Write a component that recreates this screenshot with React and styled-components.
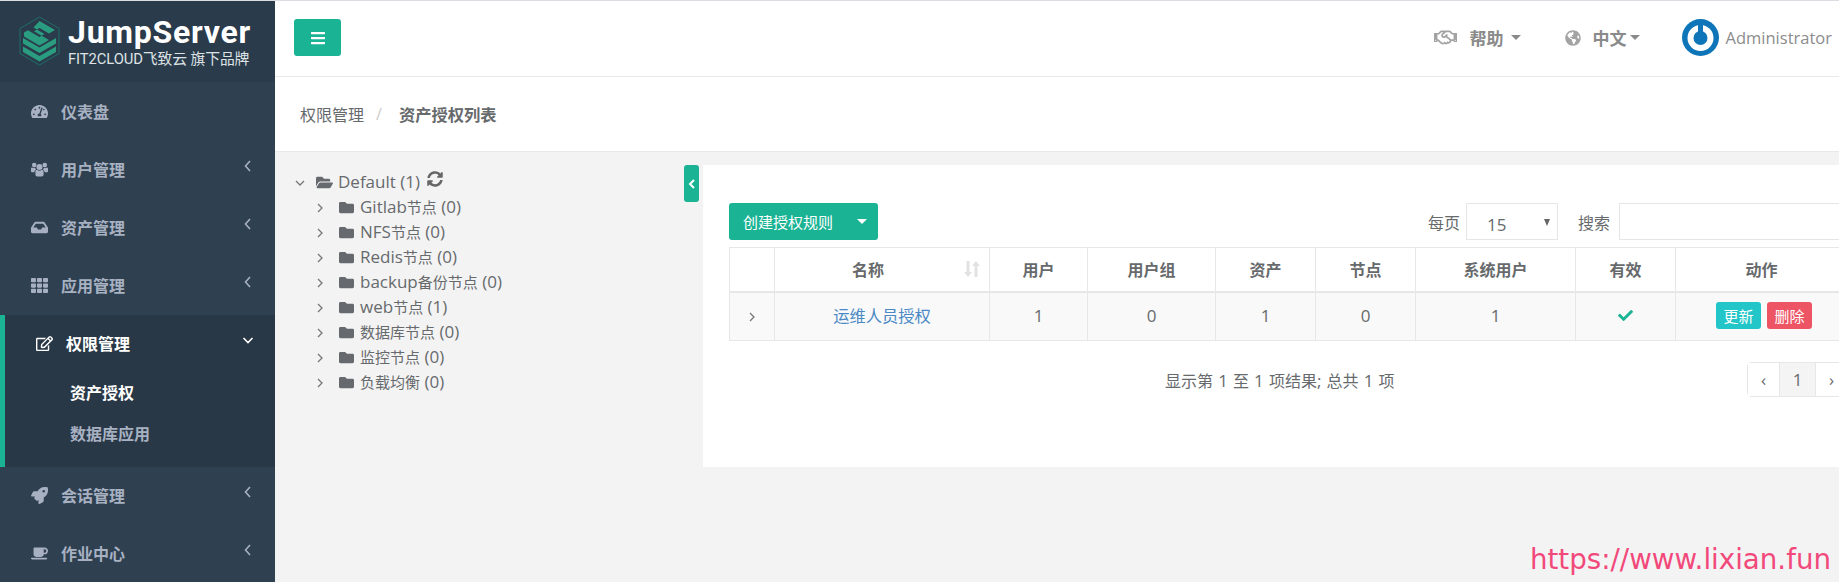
import React from "react";
import styled, { createGlobalStyle } from "styled-components";
import {
  FaTachometerAlt, FaInbox, FaTh, FaRegEdit, FaRocket, FaCoffee,
  FaRegHandshake, FaGlobeAmericas, FaSyncAlt, FaFolder, FaFolderOpen, FaCheck, FaBars,
} from "react-icons/fa";

const Global = createGlobalStyle`
  html, body { margin: 0; padding: 0; background: #f3f3f4; }
  * { box-sizing: border-box; }
  body { font-family: "Open Sans", "Noto Sans CJK SC", sans-serif; color: #676a6c; font-size: 16px; }
`;

const Shell = styled.div`
  position: relative;
  width: 1839px; height: 582px; overflow: hidden;
  display: grid; grid-template-columns: 275px 1fr;
  border-top: 1px solid #dcdde2;
  background: #f3f3f4;
`;
const Side = styled.aside`background: #2f4050; display: flex; flex-direction: column; height: 581px; overflow: hidden;`;
const Brand = styled.div`
  height: 81px; flex: none; background: #2a3b4b; margin-bottom: 1px;
  display: flex; align-items: flex-start; padding: 15px 0 0 19px; gap: 8px;
`;
const BrandText = styled.div`display: flex; flex-direction: column; color: #fff; width: 190px;`;
const BrandName = styled.span`
  font: 700 32px/36px "Roboto", sans-serif; letter-spacing: 0.75px; height: 36px; margin-top: -2px; white-space: nowrap;
`;
const BrandSub = styled.span`
  font: 400 14.8px/16px "Roboto", "Noto Sans CJK SC", sans-serif; color: #dfe3e6; margin-top: 1px; white-space: nowrap; letter-spacing: -0.1px;
`;
const NavItem = styled.div`
  height: 58px; flex: none; position: relative; display: flex; align-items: center; padding: 0 0 2px 31px;
  font-weight: 700; font-size: 16px; color: #a7b1c2;
  svg.nav { width: 17px; height: 17px; margin-right: 13px; flex: none; }
`;
const NavGroup = styled.div`
  height: 152px; flex: none; background: #293846; border-left: 5px solid #1ab394; display: flex; flex-direction: column;
  ${NavItem} { color: #fff; }
`;
const SubItem = styled.div`
  height: 41px; flex: none; display: flex; align-items: center; padding: 0 0 4px 65px; font-weight: 700; font-size: 16px;
  color: ${p => (p.$on ? "#fff" : "#a7b1c2")};
`;
const NavArrow = styled.svg`
  position: absolute; right: ${p => p.$r}px; top: 19px; width: 12px; height: 12px; fill: none; stroke: currentColor; stroke-width: 1.6;
`;
const Main = styled.main`display: flex; flex-direction: column; min-width: 0; overflow: hidden;`;
const Topbar = styled.header`
  height: 76px; flex: none; background: #fff; border-bottom: 1px solid #e7eaec;
  display: flex; align-items: center; padding-left: 19px;
`;
const MenuBtn = styled.button`
  width: 47px; height: 37px; margin-top: -2px; border: 0; border-radius: 3px; background: #1ab394; color: #fff;
  display: flex; align-items: center; justify-content: center; padding: 0;
  svg { width: 16px; height: 16px; }
`;
const TopRight = styled.div`margin-left: auto; display: flex; align-items: center; margin-top: -2px; padding-right: 7px; color: #888;`;
const TopLink = styled.div`
  display: flex; align-items: center; font-weight: 700; font-size: 17px; color: #8a8a8a; margin-right: ${p => p.$mr}px;
`;
const TopIcon = styled.span`
  display: flex; width: ${p => p.$w}px; margin-right: ${p => p.$mr}px; color: #a3a3a3;
  svg { width: ${p => p.$w}px; height: ${p => p.$w}px; }
`;
const Caret = styled.i`
  display: inline-block; width: 0; height: 0; margin-left: ${p => p.$ml}px;
  border-left: 5px solid transparent; border-right: 5px solid transparent; border-top: 5px solid currentColor;
`;
const Avatar = styled.svg`width: 37px; height: 37px; margin-right: 7px; flex: none;`;
const UserName = styled.span`font-size: 16.5px; color: #8c8c8c;`;
const Crumbs = styled.nav`
  height: 75px; flex: none; background: #fff; border-bottom: 1px solid #e7eaec;
  display: flex; align-items: center; padding-left: 25px; font-size: 16px; color: #676a6c;
`;
const Sep = styled.span`color: #ccc; margin: 0 17px 0 12px;`;
const Strong = styled.strong`font-weight: 700; font-size: 16.3px;`;
const Content = styled.section`flex: 1; display: flex; align-items: flex-start; min-height: 0;`;
const Tree = styled.div`width: 409px; flex: none; padding: 18px 0 0 20px; font-size: 17px; color: #676a6c;`;
const TreeRow = styled.div`
  height: 25px; display: flex; align-items: center; padding-left: ${p => p.$depth * 20}px; white-space: nowrap;
`;
const TreeLabel = styled.span`white-space: pre; margin-top: -2px;`;
const Cjk = styled.span`font-size: ${p => p.$size}px;`;
const TreeToggle = styled.svg`width: 10px; height: 10px; flex: none; margin-right: ${p => (p.$open ? 12 : 15)}px; fill: none; stroke: #777; stroke-width: 1.3;`;
const FolderIcon = styled.span`
  display: flex; margin: 0 ${p => p.$mr}px 0 -1px; color: #666a6e;
  svg { width: ${p => p.$w}px; height: ${p => p.$w}px; }
`;
const Refresh = styled(FaSyncAlt)`width: 16px; height: 16px; margin: -8px 0 0 7px; color: #666;`;
const PanelToggle = styled.button`
  width: 15px; height: 37px; margin: 13px 4px 0 0; flex: none; border: 0; padding: 0; border-radius: 3px; background: #1ab394;
  display: flex; align-items: center; justify-content: center;
  svg { width: 8px; height: 10px; fill: none; stroke: #fff; stroke-width: 2; }
`;
const Panel = styled.div`
  width: 1160px; height: 302px; flex: none; margin-top: 13px; background: #fff; padding: 38px 0 0 26px;
`;
const Toolbar = styled.div`width: 1118px; height: 37px; display: flex; align-items: center; justify-content: space-between;`;
const CreateBtn = styled.button`
  width: 149px; height: 37px; border: 0; border-radius: 3px; background: #1ab394; color: #fff; padding: 0 11px 0 14px;
  font: 400 15px "Open Sans", "Noto Sans CJK SC", sans-serif; display: flex; align-items: center; justify-content: space-between;
`;
const Filters = styled.div`display: flex; align-items: center; height: 37px; font-size: 16px;`;
const FilterLabel = styled.label`margin-right: ${p => p.$mr}px;`;
const Select = styled.div`
  width: 92px; height: 37px; border: 1px solid #e5e6e7; margin-right: 20px; position: relative; padding: 9px 0 0 20px; font-size: 17px; line-height: 24px;
  &::after {
    content: ""; position: absolute; right: 7px; top: 15px;
    border-left: 3.5px solid transparent; border-right: 3.5px solid transparent; border-top: 7px solid #666;
  }
`;
const SearchBox = styled.input`width: 228px; height: 37px; border: 1px solid #e5e6e7; background: #fff; outline: none;`;
const Table = styled.table`
  width: 1118px; margin-top: 7px; border-collapse: collapse; table-layout: fixed; font-size: 17px;
  th, td { border: 1px solid #e7e7e7; text-align: center; padding: 0; position: relative; }
  th { height: 44px; font-weight: 700; font-size: 16px; border-bottom-width: 2px; background: #fff; }
  td { height: 49px; padding-bottom: 2px; background: #f9f9f9; }
`;
const NameHead = styled.th`padding-right: 28px !important;`;
const SortIcon = styled.svg`position: absolute; right: 9px; top: 12px; width: 16px; height: 18px; fill: #e2e2e2;`;
const RowArrow = styled.svg`width: 8px; height: 10px; fill: none; stroke: #777; stroke-width: 1.3; margin-top: 3px;`;
const NameLink = styled.a`color: #4a89c5; text-decoration: none; font-size: 16.3px;`;
const OkIcon = styled(FaCheck)`width: 15px; height: 15px; color: #1ab394; vertical-align: -1px;`;
const Actions = styled.div`display: flex; justify-content: center; gap: 6px; margin-left: 5px;`;
const ActionBtn = styled.button`
  width: ${p => p.$w}px; height: 27px; border: 0; border-radius: 3px; padding: 0; color: #fff; background: ${p => p.$bg};
  font: 400 15px "Open Sans", "Noto Sans CJK SC", sans-serif;
`;
const Footer = styled.div`width: 1140px; margin-top: 21px; display: flex; align-items: center; height: 35px;`;
const Info = styled.div`margin-left: 436px; width: 582px; font-size: 17px; word-spacing: 0.7px;`;
const Pager = styled.div`display: flex; height: 35px; flex: none; border: 1px solid #e7e7e7; border-radius: 4px; font-size: 17px;`;
const PageCell = styled.span`
  width: ${p => p.$w}px; display: flex; align-items: center; justify-content: center;
  border-left: ${p => (p.$first ? 0 : "1px solid #e7e7e7")}; background: ${p => (p.$on ? "#f4f4f4" : "#fff")};
`;
const Watermark = styled.div`
  position: absolute; right: 8px; bottom: 5px; font: 400 27.7px/34px "DejaVu Sans", sans-serif; color: #f2497b;
`;

const Mixed = ({ text, size }) =>
  text.split(/([\u4e00-\u9fff]+)/).map((part, i) =>
    i % 2 ? <Cjk key={i} $size={size}>{part}</Cjk> : part
  );

const LeftArrow = ({ r = 21 }) => (
  <NavArrow $r={r} viewBox="0 0 12 12"><path d="M8 1 3.5 6 8 11" /></NavArrow>
);

const GroupIcon = () => (
  <svg className="nav" viewBox="0 0 20 18" fill="currentColor">
    <circle cx="10" cy="6" r="3.600" />
    <circle cx="3.800" cy="3.800" r="2.700" />
    <circle cx="16.200" cy="3.800" r="2.700" />
    <path d="M5.200 11.500c0-1.500 1-2.300 2-2.300 1 .8 1.800 1.200 2.800 1.200s1.800-.4 2.800-1.200c1 0 2 .8 2 2.300V15c0 1.400-1 2.200-2.200 2.200H7.400C6.200 17.200 5.200 16.400 5.200 15z" />
    <path d="M0 7.800c0-.8.600-1.300 1.300-1.300.8.500 1.600.8 2.500.8.500 0 .9-.1 1.200-.2.100 1 .6 1.700 1 2.100-1.200.5-2 1.700-2 3.100H1.300C.5 12.300 0 11.700 0 11z" />
    <path d="M20 7.800c0-.8-.6-1.300-1.300-1.300-.8.500-1.600.8-2.500.8-.500 0-.9-.1-1.200-.2-.1 1-.6 1.700-1 2.100 1.200.5 2 1.700 2 3.100h2.700c.8 0 1.300-.6 1.300-1.300z" />
  </svg>
);

const Logo = () => (
  <svg width="41" height="50" viewBox="0 0 41 50" style={{ flex: "none" }}>
    <path d="M20.5 1 40 12.5v25L20.5 49 1 37.5v-25z" fill="none" stroke="#1f6f68" strokeWidth="1" />
    <path d="M20.5 5 36 14l-6 3.5-9.5-5.5-5.5 3.2 15 8.8-9.5 5.500L5 20.500l0-4 4-2.300 11.500 6.800 5-3-11-6.500z" fill="#2a9d80" />
    <path d="M4 22l16.500 9.500L37 22v5.500L20.500 37 4 27.500z" fill="#2a9d80" />
    <path d="M4 30.500 20.500 40 37 30.500V36L20.500 45.500 4 36z" fill="#2a9d80" />
  </svg>
);

const navTop = [
  [FaTachometerAlt, "仪表盘", false],
  [GroupIcon, "用户管理", true],
  [FaInbox, "资产管理", true],
  [FaTh, "应用管理", true],
];
const tree = ["Gitlab节点 (0)", "NFS节点 (0)", "Redis节点 (0)", "backup备份节点 (0)", "web节点 (1)", "数据库节点 (0)", "监控节点 (0)", "负载均衡 (0)"];
const cols = [45, 215, 98, 128, 100, 100, 160, 100, 172];

export default function App() {
  return (
    <>
      <Global />
      <Shell>
        <Side>
          <Brand>
            <Logo />
            <BrandText>
              <BrandName>JumpServer</BrandName>
              <BrandSub>FIT2CLOUD飞致云 旗下品牌</BrandSub>
            </BrandText>
          </Brand>
          {navTop.map(([I, t, a]) => (
            <NavItem key={t}><I className="nav" />{t}{a && <LeftArrow />}</NavItem>
          ))}
          <NavGroup>
            <NavItem>
              <FaRegEdit className="nav" />权限管理
              <NavArrow $r={21} viewBox="0 0 12 12"><path d="M1.500 4 6 8.500 10.500 4" /></NavArrow>
            </NavItem>
            <SubItem $on>资产授权</SubItem>
            <SubItem>数据库应用</SubItem>
          </NavGroup>
          <NavItem><FaRocket className="nav" />会话管理<LeftArrow /></NavItem>
          <NavItem><FaCoffee className="nav" />作业中心<LeftArrow /></NavItem>
        </Side>
        <Main>
          <Topbar>
            <MenuBtn aria-label="menu"><FaBars /></MenuBtn>
            <TopRight>
              <TopLink $mr={44}>
                <TopIcon $w={23} $mr={13}><FaRegHandshake /></TopIcon>帮助<Caret $ml={7} />
              </TopLink>
              <TopLink $mr={42}>
                <TopIcon $w={16} $mr={12}><FaGlobeAmericas /></TopIcon>中文<Caret $ml={3} />
              </TopLink>
              <Avatar viewBox="0 0 37 37">
                <circle cx="18.500" cy="18.500" r="18.500" fill="#0e76b8" />
                <circle cx="18.500" cy="19" r="10" fill="none" stroke="#fff" strokeWidth="6" />
                <path d="M18.500 7v12" stroke="#0e76b8" strokeWidth="5" strokeLinecap="round" />
              </Avatar>
              <UserName>Administrator</UserName>
            </TopRight>
          </Topbar>
          <Crumbs>权限管理<Sep>/</Sep><Strong>资产授权列表</Strong></Crumbs>
          <Content>
            <Tree>
              <TreeRow $depth={0}>
                <TreeToggle $open viewBox="0 0 10 10"><path d="M1 3l4 4 4-4" /></TreeToggle>
                <FolderIcon $w={17} $mr={5}><FaFolderOpen /></FolderIcon>
                <TreeLabel>Default (1)</TreeLabel><Refresh />
              </TreeRow>
              {tree.map(t => (
                <TreeRow key={t} $depth={1}>
                  <TreeToggle viewBox="0 0 10 10"><path d="M3 1l4 4-4 4" /></TreeToggle>
                  <FolderIcon $w={15} $mr={6}><FaFolder /></FolderIcon>
                  <TreeLabel><Mixed text={t} size={15} /></TreeLabel>
                </TreeRow>
              ))}
            </Tree>
            <PanelToggle aria-label="collapse">
              <svg viewBox="0 0 8 10"><path d="M6 1 2 5l4 4" /></svg>
            </PanelToggle>
            <Panel>
              <Toolbar>
                <CreateBtn>创建授权规则<Caret $ml={0} /></CreateBtn>
                <Filters>
                  <FilterLabel $mr={6}>每页</FilterLabel>
                  <Select>15</Select>
                  <FilterLabel $mr={9}>搜索</FilterLabel>
                  <SearchBox />
                </Filters>
              </Toolbar>
              <Table>
                <colgroup>{cols.map((w, i) => <col key={i} style={{ width: w }} />)}</colgroup>
                <thead>
                  <tr>
                    <th />
                    <NameHead>名称
                      <SortIcon viewBox="0 0 16 18"><path d="M2.500 1h3v11H8L4 17 0 12h2.500zM10.500 6V17h3V6H16L12 1 8 6z" /></SortIcon>
                    </NameHead>
                    {["用户", "用户组", "资产", "节点", "系统用户", "有效", "动作"].map(h => <th key={h}>{h}</th>)}
                  </tr>
                </thead>
                <tbody>
                  <tr>
                    <td><RowArrow viewBox="0 0 8 10"><path d="M2 1l4 4-4 4" /></RowArrow></td>
                    <td><NameLink href="#">运维人员授权</NameLink></td>
                    <td>1</td><td>0</td><td>1</td><td>0</td><td>1</td>
                    <td><OkIcon /></td>
                    <td>
                      <Actions>
                        <ActionBtn $w={45} $bg="#23c6c8">更新</ActionBtn>
                        <ActionBtn $w={45} $bg="#ed5565">删除</ActionBtn>
                      </Actions>
                    </td>
                  </tr>
                </tbody>
              </Table>
              <Footer>
                <Info><Mixed text="显示第 1 至 1 项结果; 总共 1 项" size={16} /></Info>
                <Pager>
                  <PageCell $first $w={31}>‹</PageCell>
                  <PageCell $on $w={36}>1</PageCell>
                  <PageCell $w={32}>›</PageCell>
                </Pager>
              </Footer>
            </Panel>
          </Content>
        </Main>
        <Watermark>https://www.lixian.fun</Watermark>
      </Shell>
    </>
  );
}
